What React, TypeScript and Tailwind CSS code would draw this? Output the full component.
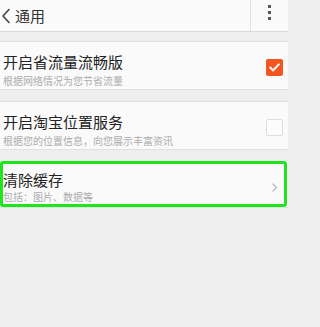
export default function App() {
  return (
    <div className="w-full min-h-screen bg-[#eeeeee]">
      <div
        className="w-[288px] min-h-[327px] bg-[#eeeeee] text-[#222] overflow-hidden"
        style={{ fontFamily: '"Noto Sans CJK SC", "Noto Sans", sans-serif' }}
      >
        {/* 顶部栏 */}
        <div className="h-[32px] bg-[#fafafa] border-b border-[#d9d9d9] flex items-stretch">
          <div className="flex items-center pl-[1px]">
            <svg width="10" height="16" viewBox="0 0 10 16" fill="none">
              <path d="M8 1.5 L2 8 L8 14.5" stroke="#444" strokeWidth="1.6" strokeLinecap="round" strokeLinejoin="round" />
            </svg>
            <span className="ml-[4px] text-[15px] leading-[20px] text-[#333]">通用</span>
          </div>
          <div className="flex-1" />
          <div className="w-px bg-[#e2e2e2]" />
          <div className="w-[37px] flex flex-col items-center pt-[5px] gap-[3px]">
            <span className="w-[3px] h-[3px] bg-[#555]" />
            <span className="w-[3px] h-[3px] bg-[#555]" />
            <span className="w-[3px] h-[3px] bg-[#555]" />
          </div>
        </div>

        <div className="h-[9px]" />

        <Row title="开启省流量流畅版" sub="根据网络情况为您节省流量">
          <div className="w-[17px] h-[17px] bg-[#f5561f] rounded-[2px] flex items-center justify-center">
            <svg width="11" height="9" viewBox="0 0 11 9" fill="none">
              <path d="M1.2 4.6 L4.2 7.4 L9.8 1.4" stroke="#fff" strokeWidth="2" strokeLinecap="round" strokeLinejoin="round" />
            </svg>
          </div>
        </Row>

        <div className="h-[11px]" />

        <Row title="开启淘宝位置服务" sub="根据您的位置信息，向您展示丰富资讯">
          <div className="w-[17px] h-[17px] border border-[#dedede] bg-[#fcfcfc] rounded-[2px]" />
        </Row>

        <div className="h-[11px]" />

        {/* 高亮项 */}
        <div className="relative h-[46px] bg-[#fafafa] flex items-center pl-[3px] pr-[5px]">
          <div className="flex-1 flex flex-col pt-[5px]">
            <span className="text-[15px] leading-[18px]">清除缓存</span>
            <span className="text-[10px] leading-[13px] mt-[1px] text-[#acacac]">包括：图片、数据等</span>
          </div>
          <svg width="6" height="9" viewBox="0 0 6 9" fill="none" className="mr-[5px] mt-[6px]">
            <path d="M1 1 L4.5 4.5 L1 8" stroke="#b8b8b8" strokeWidth="1.2" strokeLinecap="round" />
          </svg>
          <div className="absolute inset-0 right-[1px] border-[3px] border-[#1ee51e] rounded-[3px]" />
        </div>
        <div className="h-px bg-[#e0e0e0]" />
      </div>
    </div>
  );
}

function Row({ title, sub, children }: { title: string; sub: string; children: React.ReactNode }) {
  return (
    <div className="h-[49px] bg-[#fafafa] border-y border-[#e0e0e0] flex items-center pl-[3px] pr-[5px]">
      <div className="flex-1 flex flex-col pt-[8px]">
        <span className="text-[15px] leading-[18px]">{title}</span>
        <span className="text-[10px] leading-[13px] mt-[3px] text-[#acacac]">{sub}</span>
      </div>
      <div className="flex items-center pt-[3px]">{children}</div>
    </div>
  );
}
